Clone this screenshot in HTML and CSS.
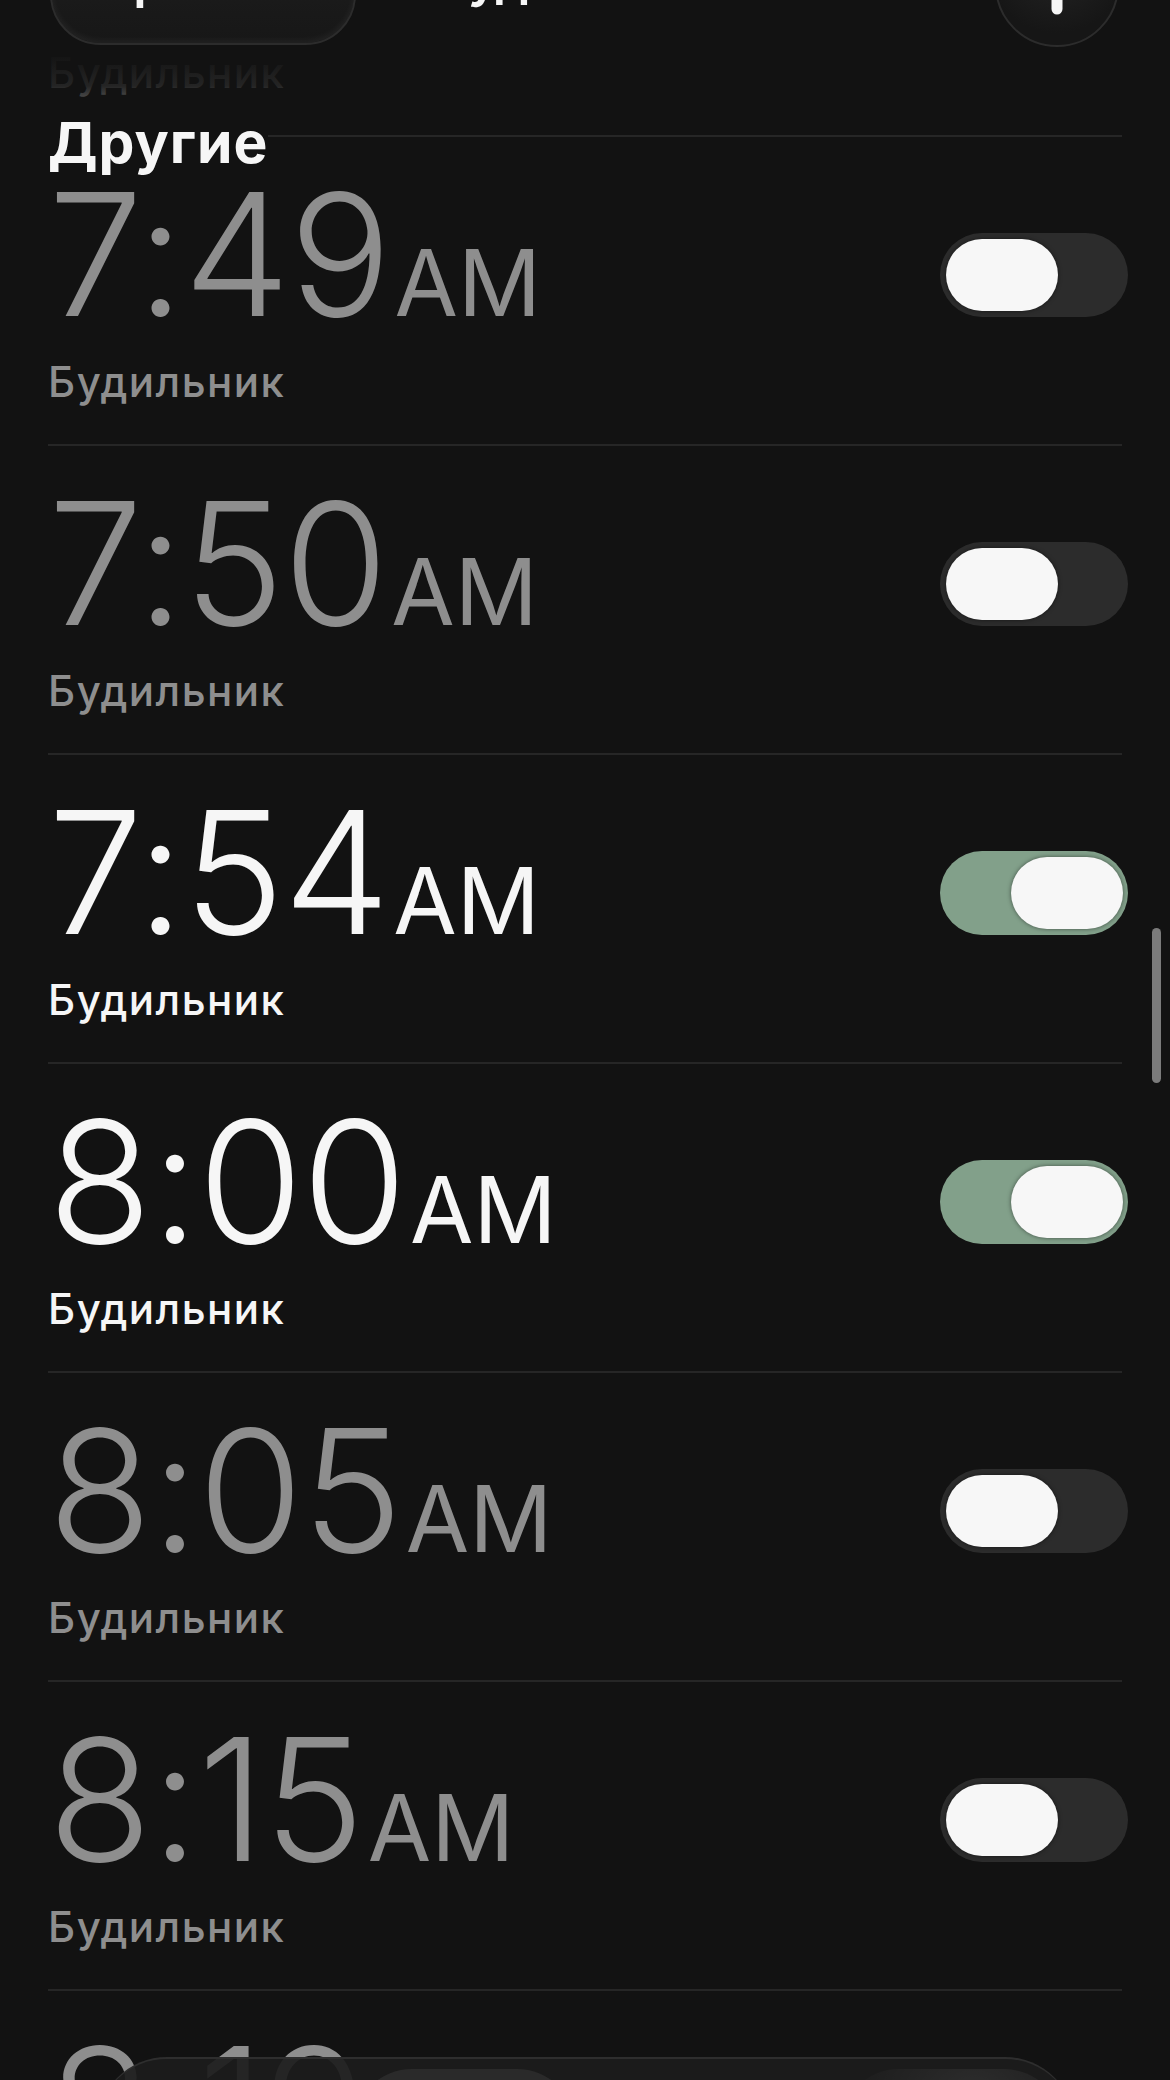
FILE: index.html
```html
<!DOCTYPE html>
<html lang="ru">
<head>
    <meta charset="UTF-8">
    <meta name="viewport" content="width=device-width, initial-scale=1.0">
    <title>Будильник</title>
    <link rel="stylesheet" href="styles.css">
</head>
<body>

<div class="screen">

    <!-- Top bar: edit pill, title, add button -->
    <header class="nav">
        <button class="nav-pill">Править</button>
        <div class="nav-title">Будильник</div>
        <button class="nav-add" aria-label="Добавить">
            <svg viewBox="0 0 60 60" width="60" height="60">
                <path d="M30 6 V54 M6 30 H54" stroke="#f6f6f6" stroke-width="11" stroke-linecap="round" fill="none"/>
            </svg>
        </button>
    </header>

    <div class="section-title"><span>Другие</span></div>

    <!-- Alarm list (scrolled) -->
    <ul class="alarms">
        <li class="alarm off">
            <div class="alarm-text">
                <div class="time">7:45<span class="ampm">AM</span></div>
                <div class="label">Будильник</div>
            </div>
            <span class="switch"><span class="knob"></span></span>
        </li>
        <li class="alarm off">
            <div class="alarm-text">
                <div class="time">7:49<span class="ampm">AM</span></div>
                <div class="label">Будильник</div>
            </div>
            <span class="switch"><span class="knob"></span></span>
        </li>
        <li class="alarm off">
            <div class="alarm-text">
                <div class="time">7:50<span class="ampm">AM</span></div>
                <div class="label">Будильник</div>
            </div>
            <span class="switch"><span class="knob"></span></span>
        </li>
        <li class="alarm on">
            <div class="alarm-text">
                <div class="time">7:54<span class="ampm">AM</span></div>
                <div class="label">Будильник</div>
            </div>
            <span class="switch"><span class="knob"></span></span>
        </li>
        <li class="alarm on">
            <div class="alarm-text">
                <div class="time">8:00<span class="ampm">AM</span></div>
                <div class="label">Будильник</div>
            </div>
            <span class="switch"><span class="knob"></span></span>
        </li>
        <li class="alarm off">
            <div class="alarm-text">
                <div class="time">8:05<span class="ampm">AM</span></div>
                <div class="label">Будильник</div>
            </div>
            <span class="switch"><span class="knob"></span></span>
        </li>
        <li class="alarm off">
            <div class="alarm-text">
                <div class="time">8:15<span class="ampm">AM</span></div>
                <div class="label">Будильник</div>
            </div>
            <span class="switch"><span class="knob"></span></span>
        </li>
        <li class="alarm off">
            <div class="alarm-text">
                <div class="time">8:19<span class="ampm">AM</span></div>
                <div class="label">Будильник</div>
            </div>
            <span class="switch"><span class="knob"></span></span>
        </li>
    </ul>

    <div class="scroll-thumb"></div>

    <!-- Bottom tab bar -->
    <nav class="tabbar">
        <span class="tab"></span>
        <span class="tab tab-active"></span>
        <span class="tab"></span>
        <span class="tab tab-glow"></span>
    </nav>

</div>

</body>
</html>
```

FILE: styles.css
```css
body {
    margin: 0;
    padding: 0;
    background-color: #121212;
    font-family: Inter, "Noto Sans", sans-serif;
    color: #f6f6f6;
}
.screen {
    position: relative;
    width: 1170px;
    height: 2080px;
    overflow: hidden;
    background-color: #121212;
}

/* top bar */
.nav {
    position: absolute;
    top: 0;
    left: 0;
    right: 0;
    height: 122px;
    z-index: 5;
    background: linear-gradient(to bottom,
        #121212 0,
        #121212 52px,
        rgba(18, 18, 18, 0.85) 86px,
        rgba(18, 18, 18, 0) 120px);
}
.nav-pill {
    position: absolute;
    left: 50px;
    top: -56px;
    width: 306px;
    height: 101px;
    border-radius: 51px;
    border: 2px solid #2c2c2c;
    background: linear-gradient(to bottom, #1e1e1e, #171717);
    box-shadow: inset 0 -3px 6px rgba(255, 255, 255, 0.05);
    color: #f6f6f6;
    font-family: Inter, sans-serif;
    font-size: 51px;
    font-weight: 600;
    line-height: 51px;
    padding: 0 0 30px;
}
.nav-title {
    position: absolute;
    left: 0;
    right: 24px;
    top: -47px;
    text-align: center;
    font-size: 51px;
    font-weight: 600;
    line-height: 51px;
}
.nav-add {
    position: absolute;
    left: 995px;
    top: -77px;
    width: 124px;
    height: 124px;
    border-radius: 50%;
    border: 2px solid #2c2c2c;
    background: radial-gradient(circle at 50% 30%, #252525, #161616 70%);
    padding: 0;
    display: flex;
    align-items: center;
    justify-content: center;
}

/* pinned section header */
.section-title {
    position: absolute;
    top: 114px;
    left: 48px;
    z-index: 4;
}
.section-title span {
    display: block;
    font-size: 57px;
    font-weight: 700;
    line-height: 57px;
    letter-spacing: 1px;
    background-color: #121212;
    color: #f6f6f6;
}

/* alarm rows */
.alarms {
    list-style: none;
    margin: -172px 48px 0 48px;
    padding: 0;
}
.alarm {
    display: flex;
    align-items: flex-start;
    justify-content: space-between;
    padding: 42px 0 37px;
    border-bottom: 2px solid #262626;
}
.time {
    font-size: 170px;
    font-weight: 300;
    line-height: 150px;
    letter-spacing: -1px;
    white-space: nowrap;
}
.ampm {
    font-size: 92px;
    font-weight: 400;
    line-height: 1;
    letter-spacing: 0;
    margin-left: 4px;
}
.label {
    margin-top: 28px;
    font-size: 42px;
    font-weight: 500;
    line-height: 50px;
    letter-spacing: 1.5px;
}
.alarm.off .time, .alarm.off .label {
    color: #8e8e8e;
}

/* toggle */
.switch {
    position: relative;
    flex-shrink: 0;
    width: 188px;
    height: 84px;
    margin-top: 54px;
    margin-right: -6px;
    border-radius: 42px;
    background-color: #2c2c2c;
}
.knob {
    position: absolute;
    top: 6px;
    left: 6px;
    width: 112px;
    height: 72px;
    border-radius: 36px;
    background-color: #f7f7f7;
    box-shadow: 0 0 4px rgba(0, 0, 0, 0.5);
}
.alarm.on .switch {
    background-color: #82a08a;
}
.alarm.on .knob {
    left: 71px;
}

.scroll-thumb {
    position: absolute;
    left: 1152px;
    top: 928px;
    width: 9px;
    height: 155px;
    border-radius: 5px;
    background-color: #7b7b7b;
}

/* tab bar */
.tabbar {
    position: absolute;
    left: 97px;
    top: 2057px;
    width: 978px;
    height: 140px;
    border-radius: 70px;
    border-top: 2px solid #2e2e2e;
    background: rgba(28, 28, 28, 0.92);
    display: flex;
    gap: 20px;
    padding: 10px 12px;
    box-sizing: border-box;
}
.tab {
    flex: 1;
    border-radius: 60px;
}
.tab-active {
    background-color: #2a2a2a;
}
.tab-glow {
    background: radial-gradient(ellipse at 60% 20%, rgba(255, 255, 255, 0.08), rgba(255, 255, 255, 0) 70%);
}
```
